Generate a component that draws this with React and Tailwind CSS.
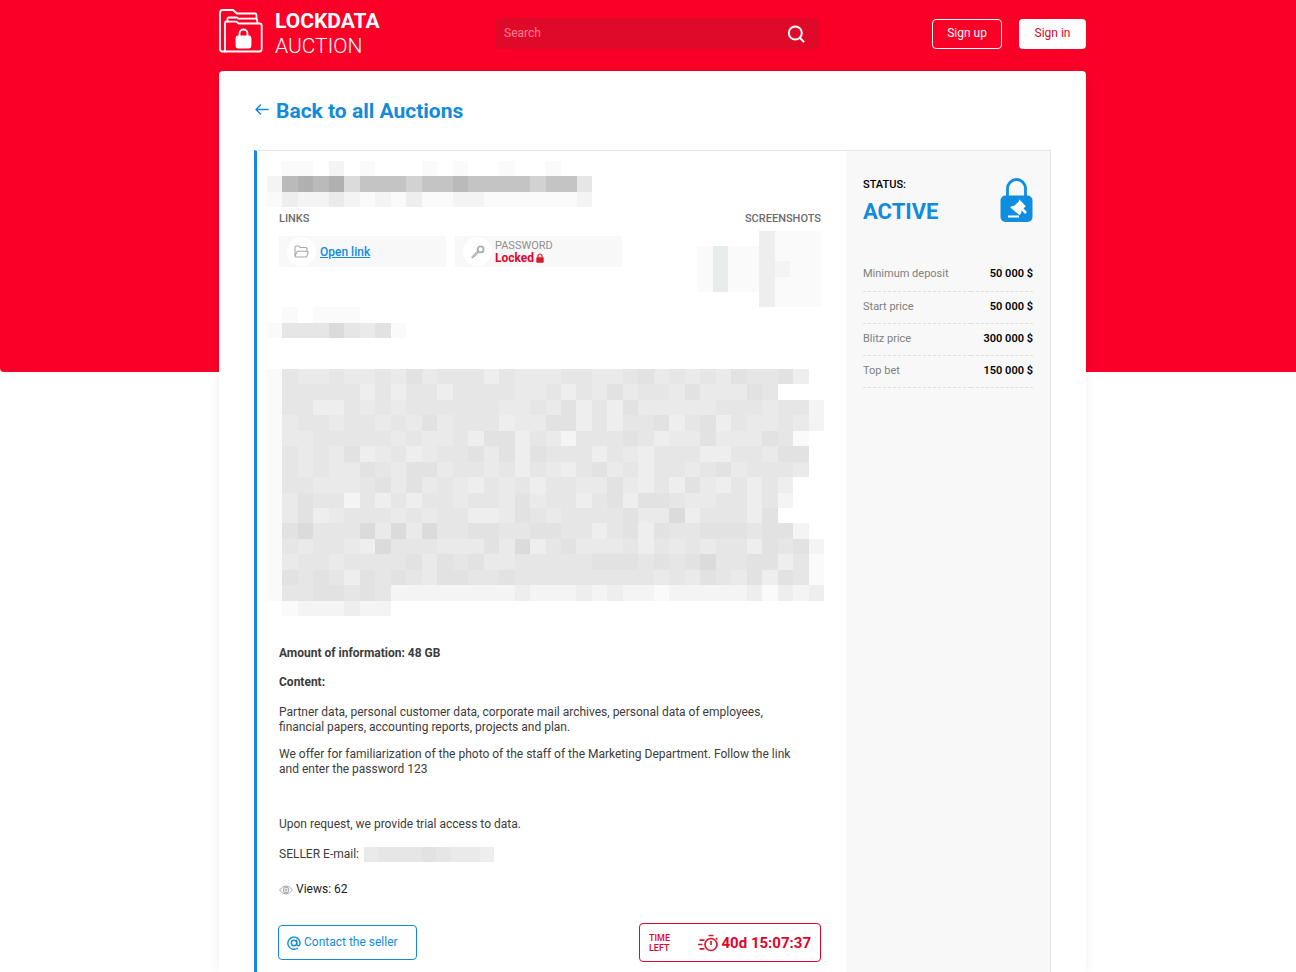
import React from "react";

const SHADES = {
  a: "#fafafa", b: "#f4f4f4", c: "#eeeeee", d: "#eaeaea", e: "#e6e6e6", f: "#e2e2e2",
  g: "#dbdbdb", k: "#d2d2d2", h: "#c4c4c4", i: "#bababa", j: "#b0b0b0", t: "#e8eceb",
};

const TITLE = [
  ".aa.b.a...a.a..a..a..",
  "bijijghhhkhhihhhhkhhe",
  "acbbdbabacaabbaaaaaab",
];
const SUBTITLE = [".a.aaa...", "aeeegedfa"];
const SHOTS = ["....caaa", "ataacaaa", "ataacbaa", "ataacaaa", "....caaa"];
const EMAIL = ["deeefeddc"];
const BODY = [
  "aeddeddedfdeeeceddd" + "eeddefdededfeefc.",
  "aeeeeececeeceeeedde" + "cedfdeedfdddfe...",
  "aeeccededeeeeeedded" + "fcecfdddddeeedeeb",
  "adeedeededfdeeecddf" + "fceceefcefceddedb",
  "addeeeeededdecffced" + "beeefecddfdddfea.",
  "aededfcdecdeefdfcfe" + "eecedceeecceedff.",
  "aededdfedffdeedeced" + "cefdeceedefdeeed.",
  "aeedddefdfdedcedece" + "eddfdcecfdcecec..",
  "adfeebececeedeedfde" + "ecefcffeddeeceb..",
  "adfcdeeededeeccdfed" + "eeeefddgceeecf...",
  "afgeeegdgdgeeffeeff" + "eecefcfeefffeffb.",
  "aedeedcgeeedddfdgce" + "fdddecededeecfefb",
  "adeedeeeefdfefddeee" + "eefffefefgeeffcea",
  "afefecfefedffeefeee" + "eeeeeededfedfcfea",
  "aeeffefebbbbbbbbcbb" + "bcbcbbabbbbbcacbc",
  ".abbbcbb",
];

function Mosaic({ rows, className, label }) {
  const cols = Math.max(...rows.map((r) => r.length));
  return (
    <svg
      role="img"
      aria-label={label}
      className={className}
      viewBox={`0 0 ${cols} ${rows.length}`}
      preserveAspectRatio="none"
      shapeRendering="crispEdges"
    >
      {rows.flatMap((row, y) =>
        [...row].map((c, x) =>
          SHADES[c] ? <rect key={`${x}-${y}`} x={x} y={y} width="1" height="1" fill={SHADES[c]} /> : null
        )
      )}
    </svg>
  );
}

function Logo() {
  return (
    <svg className="h-11 w-11" viewBox="0 0 44 44" fill="none" stroke="white" strokeWidth="1.8" strokeLinejoin="round" strokeLinecap="round" aria-hidden="true">
      <path d="M5.500 42.500h-2q-2.500 0-2.500-2.500v-36q0-3 2.500-3h10.500l4 3.500h18q1.500 0 1.500 2v2" />
      <path d="M6 42V14q0-1.500 1.500-1.500h1V10q0-1.500 1.500-1.500h8l1.500 1.200h17q1.800 0 1.800 1.800v2.500" />
      <path d="M8.500 12.700h9l2 1.800h21q2.200 0 2.200 2V40q0 2.500-2.500 2.500H5.500" />
      <path d="M20.500 28v-3.500a4 4 0 0 1 8 0V28" />
      <rect x="17.500" y="27.500" width="14" height="11" rx="1.500" fill="white" />
    </svg>
  );
}

function StatusLock() {
  return (
    <svg className="h-11 w-[33px]" viewBox="0 0 33 44" aria-hidden="true">
      <path d="M7.500 19V10.500a9 9 0 0 1 18 0V19" fill="none" stroke="#0f8de0" strokeWidth="2.800" />
      <rect x="0.500" y="17.500" width="32" height="26.500" rx="5" fill="#0f8de0" />
      <path d="M19.200 21.200l6.600 7-2.300 2.400 3.400 3.500-1.800 1.800-3.400-3.500-.7 3.400-1.700 1.200-9-7.500 1.300-1.200 2.700-.6 4.300-4z" fill="white" />
      <rect x="8" y="37.500" width="11" height="2" fill="white" />
    </svg>
  );
}

function SmallLock() {
  return (
    <svg className="h-[10px] w-2" viewBox="0 0 8 10" aria-hidden="true">
      <path d="M2 5V3a2 2 0 0 1 4 0v2" fill="none" stroke="#d9182b" strokeWidth="1.200" />
      <rect x="0.300" y="4.200" width="7.400" height="5.500" rx="0.800" fill="#d9182b" />
    </svg>
  );
}

function Timer() {
  return (
    <svg className="h-[18px] w-5" viewBox="0 0 20 18" fill="none" stroke="#d9182b" strokeWidth="1.700" aria-hidden="true">
      <circle cx="13" cy="10.500" r="6" />
      <path d="M13 7v4M10.500 1.500h5M18 4l1.300 1.300M1.500 6.200h5M0 10.500h4.500M1.500 14.800h5" />
    </svg>
  );
}

const PRICES = [
  ["Minimum deposit", "50 000 $"],
  ["Start price", "50 000 $"],
  ["Blitz price", "300 000 $"],
  ["Top bet", "150 000 $"],
];

export default function App() {
  return (
    <div className="min-h-screen bg-white font-['Roboto',sans-serif] text-[12px] leading-[15px] text-[#3c3c3c]">
      <header className="rounded-bl-sm bg-[#fb0027] pb-[301px] pl-[9px]">
        <div className="mx-auto flex h-[71px] max-w-[867px] items-center justify-between pb-1">
          <a href="#home" className="flex w-[277px] items-start gap-3 text-white">
            <Logo />
            <span className="flex flex-col text-[21px] leading-[25px]">
              <b className="font-bold">LOCKDATA</b>
              <span className="font-light">AUCTION</span>
            </span>
          </a>
          <form role="search" className="flex h-[31px] w-[323px] items-center rounded-sm bg-[#df0a2a] pr-3.5 pl-2">
            <input type="search" aria-label="Search" placeholder="Search" className="min-w-0 flex-1 bg-transparent text-white outline-none placeholder:text-[#ff7f8f]" />
            <button type="button" aria-label="Submit search">
              <svg className="size-[18px]" viewBox="0 0 18 18" fill="none" stroke="white" strokeWidth="2" strokeLinecap="round">
                <circle cx="8.300" cy="8" r="6.500" />
                <path d="M13 13l3.500 3.500" />
              </svg>
            </button>
          </form>
          <div className="flex w-[267px] justify-end gap-[17px]">
            <button type="button" className="h-[30px] w-[70px] rounded border border-white text-white">Sign up</button>
            <button type="button" className="h-[30px] w-[67px] rounded bg-white text-[#e0052c]">Sign in</button>
          </div>
        </div>
      </header>

      <div className="-mt-[301px] pl-[9px]">
        <main className="mx-auto max-w-[867px] rounded-t bg-white px-[35px] shadow-[0_0_12px_rgba(0,0,0,0.07)]">
          <h1 className="flex h-[79px] items-center text-[21px] leading-[26px] font-bold text-[#128bdc]">
            <a href="#auctions" className="flex items-center gap-1.5">
              <svg className="h-4 w-4" viewBox="0 0 16 16" fill="none" stroke="currentColor" strokeWidth="1.500" strokeLinecap="round" strokeLinejoin="round" aria-hidden="true">
                <path d="M14 6.500H2M6.500 2l-4.500 4.500 4.500 4.500" />
              </svg>
              Back to all Auctions
            </a>
          </h1>

          <article className="flex border-t border-r border-l-[3px] border-t-[#e6e6e6] border-r-[#e6e6e6] border-l-[#118ade]">
            <section className="min-w-0 flex-1 pt-2.5 pr-[25px] pb-2.5 pl-[22px]">
              <Mosaic rows={TITLE} label="Hidden title" className="-ml-3 h-[46px] w-[325px]" />

              <div className="mt-[5px] flex items-start justify-between text-[11px] leading-[14px]">
                <div>
                  <h2 className="font-medium text-[#6c6c6c]">LINKS</h2>
                  <div className="mt-2.5 flex gap-[9px]">
                    <div className="flex h-[31px] w-[167px] items-center gap-1 bg-[#f8f8f8] pl-2">
                      <span className="flex size-[29px] items-center justify-center rounded-full bg-white">
                        <svg className="h-[13px] w-[15px]" viewBox="0 0 15 13" fill="none" stroke="#a8a8a8" strokeWidth="1.100" strokeLinejoin="round" aria-hidden="true">
                          <path d="M1 11V2q0-1 1-1h3l1.200 1.500H12q1 0 1 1V6M1 11l2-4q.4-.8 1.200-.8h9q1.200 0 .8 1L13 11q-.3 1-1.300 1H2q-1 0-1-1z" />
                        </svg>
                      </span>
                      <a href="#link" className="text-[12px] font-medium text-[#128bdc] underline underline-offset-1">Open link</a>
                    </div>
                    <div className="flex h-[31px] w-[167px] items-center gap-[3px] bg-[#f8f8f8] pl-2">
                      <span className="flex size-[29px] items-center justify-center rounded-full bg-white">
                        <svg className="size-[14px]" viewBox="0 0 14 14" aria-hidden="true">
                          <path d="M7.300 7.900L2.300 12.600l-1.500.4.4-1.600L6 6.500z" fill="#c4c4c4" stroke="#a8a8a8" strokeWidth="0.900" strokeLinejoin="round" />
                          <circle cx="9.600" cy="4.400" r="3" fill="none" stroke="#adadad" strokeWidth="1.800" />
                        </svg>
                      </span>
                      <div className="leading-[13px]">
                        <p className="text-[#8f8f8f]">PASSWORD</p>
                        <p className="flex items-center gap-0.5 text-[12px] font-bold text-[#e0052c]">
                          Locked <SmallLock />
                        </p>
                      </div>
                    </div>
                  </div>
                </div>
                <div className="flex flex-col items-end">
                  <h2 className="font-medium text-[#6c6c6c]">SCREENSHOTS</h2>
                  <Mosaic rows={SHOTS} label="Hidden screenshots" className="mt-[5px] h-[76px] w-[124px]" />
                </div>
              </div>

              <Mosaic rows={SUBTITLE} label="Hidden subtitle" className="-ml-3 h-[31px] w-[139px]" />
              <Mosaic rows={BODY} label="Hidden description" className="mt-[31px] -ml-3 h-[247px] w-[557px]" />

              <p className="mt-[30px] font-bold">Amount of information: 48 GB</p>
              <p className="mt-3.5 font-bold">Content:</p>
              <p className="mt-[15px] max-w-[528px]">
                Partner data, personal customer data, corporate mail archives, personal data of employees, financial papers, accounting reports, projects and plan.
              </p>
              <p className="mt-3 max-w-[528px]">
                We offer for familiarization of the photo of the staff of the Marketing Department. Follow the link and enter the password 123
              </p>
              <p className="mt-10">Upon request, we provide trial access to data.</p>
              <p className="mt-[15px] flex items-center gap-[5px]">
                SELLER E-mail: <Mosaic rows={EMAIL} label="Hidden e-mail" className="h-[15px] w-[130px]" />
              </p>
              <p className="mt-5 flex items-center gap-[3px] text-[#222]">
                <svg className="h-[10px] w-[14px]" viewBox="0 0 14 10" fill="none" stroke="#9a9a9a" strokeWidth="0.900" aria-hidden="true">
                  <path d="M.5 5Q3.500 1 7 1t6.500 4Q10.500 9 7 9T.5 5z" />
                  <circle cx="7" cy="5" r="2.800" />
                  <circle cx="7" cy="5" r="1" />
                </svg>
                Views: 62
              </p>

              <div className="mt-[26px] flex items-center justify-between">
                <button type="button" className="-ml-px flex h-[35px] w-[139px] items-center gap-[3px] rounded border border-[#128bdc] pl-2 text-[#128bdc]">
                  <svg className="size-[14px]" viewBox="0 0 14 14" fill="none" stroke="currentColor" strokeWidth="1.400" strokeLinecap="round" aria-hidden="true">
                    <circle cx="7" cy="7" r="2.700" />
                    <path d="M9.700 4.300V8q0 1.700 1.600 1.700T13.100 7A6.100 6.100 0 1 0 10.500 12.200" />
                  </svg>
                  Contact the seller
                </button>
                <div className="flex h-[39px] w-[182px] items-center justify-between rounded border border-[#e0052c] px-[9px] text-[#e0052c]">
                  <span className="w-6 text-[9px] leading-[10px] font-medium">TIME LEFT</span>
                  <span className="flex items-center gap-1 text-[15px] leading-5 font-bold">
                    <Timer />
                    40d 15:07:37
                  </span>
                </div>
              </div>
            </section>

            <aside className="w-[204px] bg-[#f8f8f8] pt-[27px] pr-[17px] pl-[17px] text-[11px]">
              <div className="flex justify-between">
                <div>
                  <p className="font-medium leading-[13px] text-black">STATUS:</p>
                  <p className="mt-2 text-[22px] leading-[26px] font-bold text-[#128bdc]">ACTIVE</p>
                </div>
                <StatusLock />
              </div>
              <table className="mt-[34px] w-full">
                <tbody>
                  {PRICES.map(([name, value]) => (
                    <tr key={name} className="h-8 border-b border-dashed border-[#dedede]">
                      <th scope="row" className="pb-0.5 text-left font-normal text-[#808080]">{name}</th>
                      <td className="pb-0.5 text-right font-semibold text-black">{value}</td>
                    </tr>
                  ))}
                </tbody>
              </table>
            </aside>
          </article>
        </main>
      </div>
    </div>
  );
}
